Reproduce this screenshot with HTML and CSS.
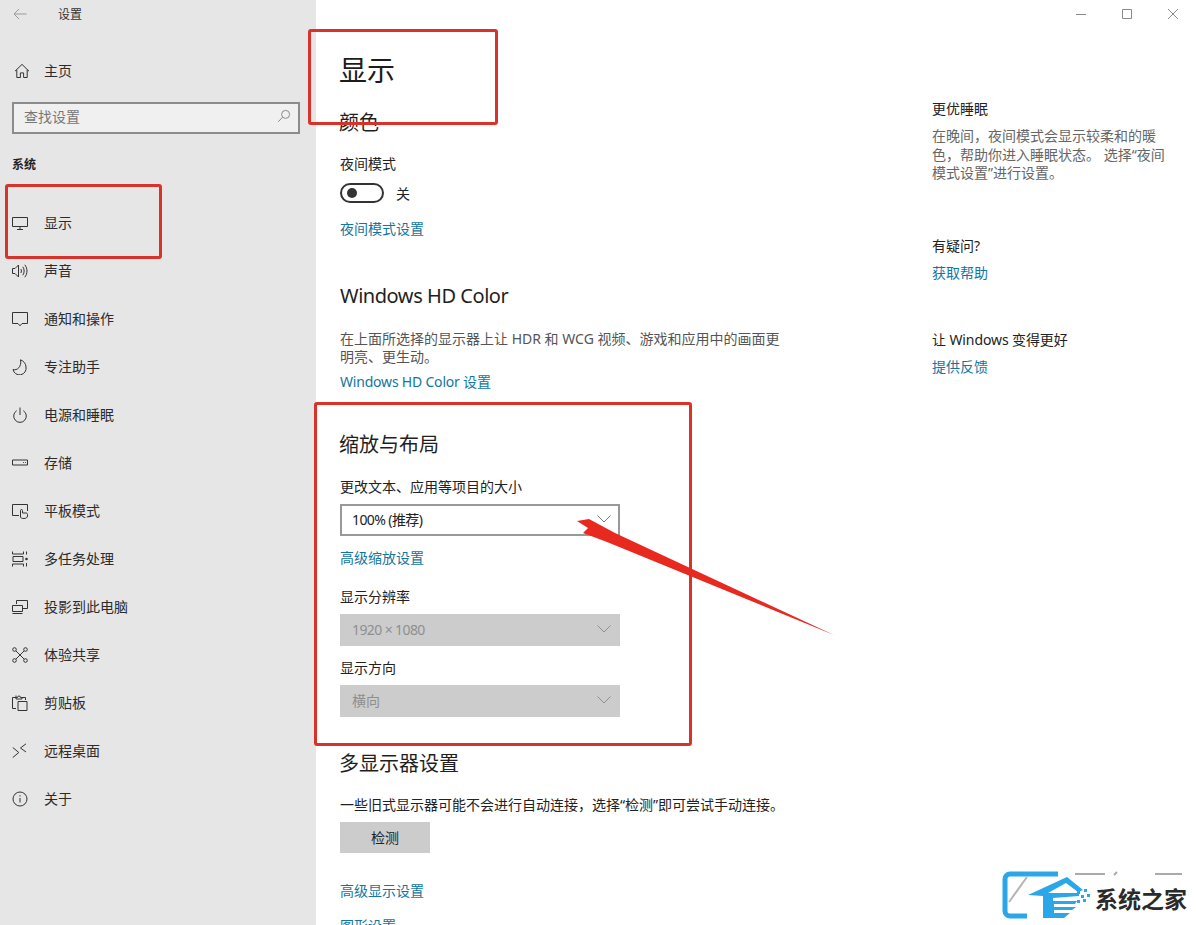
FILE: index.html
```html
<!DOCTYPE html>
<html lang="zh-CN">
<head>
<meta charset="utf-8">
<title>设置</title>
<link rel="stylesheet" href="styles.css">
</head>
<body>
<div class="app">
  <nav class="sidebar">
    <div class="titlebar">
      <svg class="back" viewBox="0 0 14 12"><path d="M13.5 6H1M6 1 1 6l5 5"/></svg>
      <span>设置</span>
    </div>
    <a class="item home"><svg viewBox="0 0 16 16"><path d="M1 8.2 8 1.4l7 6.8M2.8 6.8v7.7h3.6v-4.6h3.2v4.6h3.6V6.8"/></svg><span>主页</span></a>
    <div class="search"><span>查找设置</span><svg viewBox="0 0 14 14"><circle cx="8.6" cy="5.4" r="4"/><path d="M5.6 8.2 1.2 12.8"/></svg></div>
    <h2 class="group">系统</h2>
    <a class="item first"><svg viewBox="0 0 16 16"><path d="M.5 2.5h15v9H.5zM8 11.5v2.5M5 14.5h6"/></svg><span>显示</span></a>
    <a class="item"><svg viewBox="0 0 16 16"><path d="M.5 5.5h2.5L6.5 2v12L3 10.5H.5zM8.8 6c.8 1.200.8 2.800 0 4M10.800 3.800c1.800 2.500 1.800 5.900 0 8.400M12.800 1.800c2.900 3.700 2.900 8.700 0 12.400"/></svg><span>声音</span></a>
    <a class="item"><svg viewBox="0 0 16 16"><path d="M.5 1.500h15v11h-5.500L8 14.800 6 12.500H.5z"/></svg><span>通知和操作</span></a>
    <a class="item"><svg viewBox="0 0 16 16"><path d="M8.500.8c3 1 5.500 3.900 5.500 7.200a6.500 6.500 0 0 1-13 2.500c4 1.500 9-3 7.500-9.700z"/></svg><span>专注助手</span></a>
    <a class="item"><svg viewBox="0 0 16 16"><path d="M8 .5v7.500M4.700 3.700a6.300 6.300 0 1 0 6.600 0"/></svg><span>电源和睡眠</span></a>
    <a class="item"><svg viewBox="0 0 16 16"><path d="M.5 5h15v5H.5zM11 7.500h.8M13 7.500h.8"/></svg><span>存储</span></a>
    <a class="item"><svg viewBox="0 0 16 16"><path d="M7 12.500H.5v-11h15v6.500M8.500 14V7.500a1 1 0 0 1 2 0V10h3.500c1 0 1.500.6 1.500 1.500v1.500c0 1.500-1.500 2.500-3.500 2.500-2 0-3.500-.5-3.500-1.500z"/></svg><span>平板模式</span></a>
    <a class="item"><svg viewBox="0 0 16 16"><path d="M.5.500v2.500h11V.5M.5 15.500V13h11v2.500M1 5.500h10v5H1zM14.500.5v3M14.500 12v3.500"/><circle class="dot" cx="14.500" cy="8" r="1.300"/></svg><span>多任务处理</span></a>
    <a class="item"><svg viewBox="0 0 16 16"><path d="M4.500 5V1.500h11v8H11M.5 6.500h10v6H.5zM.5 14.500h10"/></svg><span>投影到此电脑</span></a>
    <a class="item"><svg viewBox="0 0 16 16"><circle cx="2.500" cy="2.500" r="1.800"/><circle cx="13.500" cy="2.500" r="1.800"/><circle cx="2.500" cy="13.500" r="1.800"/><circle cx="13.500" cy="13.500" r="1.800"/><path d="m4 4 8 8M12 4l-8 8"/></svg><span>体验共享</span></a>
    <a class="item"><svg viewBox="0 0 16 16"><path d="M4 13.500H.5V2.500H4M10 2.500h3.500V5M4 .5V4h6V2.500H8.500a1.500 1.500 0 0 0-3 0H4M6 6.500h9v9H6z"/></svg><span>剪贴板</span></a>
    <a class="item"><svg viewBox="0 0 16 16"><path d="m.8 4.500 6 5-6 5M14 .8 8.500 5l5.500 4"/></svg><span>远程桌面</span></a>
    <a class="item"><svg viewBox="0 0 16 16"><circle cx="8" cy="8" r="7"/><path d="M8 7v4.500M8 4.200v1.300"/></svg><span>关于</span></a>
  </nav>

  <main class="content">
    <h1 class="page-title">显示</h1>
    <h2 class="heading cjk colour-heading">颜色</h2>
    <div class="label night-label">夜间模式</div>
    <div class="toggle-row"><span class="toggle"><i></i></span><span>关</span></div>
    <a class="link night-link">夜间模式设置</a>
    <h2 class="heading hd-heading">Windows HD Color</h2>
    <p class="desc">在上面所选择的显示器上让 HDR 和 WCG 视频、游戏和应用中的画面更明亮、更生动。</p>
    <a class="link hd-link">Windows HD Color 设置</a>
    <h2 class="heading cjk scale-heading">缩放与布局</h2>
    <div class="label scale-label">更改文本、应用等项目的大小</div>
    <div class="select"><span class="num">100% (推荐)</span><svg viewBox="0 0 14 8"><path d="m.5.500 6.500 6.500 6.500-6.500"/></svg></div>
    <a class="link scale-link">高级缩放设置</a>
    <div class="label res-label">显示分辨率</div>
    <div class="select disabled"><span class="num">1920 × 1080</span><svg viewBox="0 0 14 8"><path d="m.5.500 6.500 6.500 6.500-6.500"/></svg></div>
    <div class="label orient-label">显示方向</div>
    <div class="select disabled"><span>横向</span><svg viewBox="0 0 14 8"><path d="m.5.500 6.500 6.500 6.500-6.500"/></svg></div>
    <h2 class="heading cjk multi-heading">多显示器设置</h2>
    <div class="label multi-label">一些旧式显示器可能不会进行自动连接，选择“检测”即可尝试手动连接。</div>
    <div class="button">检测</div>
    <a class="link adv-link">高级显示设置</a>
    <a class="link gfx-link">图形设置</a>
  </main>

  <aside class="aside">
    <div class="caption">
      <svg viewBox="0 0 10 10"><path d="M0 5.500h10"/></svg>
      <svg viewBox="0 0 10 10"><path d="M.5.500h9v9h-9z"/></svg>
      <svg viewBox="0 0 10 10"><path d="m0 0 10 10M10 0 0 10"/></svg>
    </div>
    <div class="label sleep-title">更优睡眠</div>
    <p class="note">在晚间，夜间模式会显示较柔和的暖色，帮助你进入睡眠状态。 选择“夜间模式设置”进行设置。</p>
    <div class="label q-title">有疑问?</div>
    <a class="link q-link">获取帮助</a>
    <div class="label better-title">让 Windows 变得更好</div>
    <a class="link q-link">提供反馈</a>
  </aside>
</div>

<div class="mark mark-title"></div>
<div class="mark mark-nav"></div>
<div class="mark mark-scale"></div>
<svg class="arrow" viewBox="0 0 280 130"><polygon points="3,22 15,20 41,34 260,136 33,43 9,34 14,29"/></svg>

<svg class="ghost" viewBox="0 0 110 5"><path d="M0 3h30M42 1l-3 3M80 3h27"/></svg>
<div class="logo">
  <svg viewBox="0 0 92 52">
    <path class="logo-frame" d="M56 4H8a5 5 0 0 0-5 5v32a5 5 0 0 0 5 5h17" />
    <path class="logo-fold" d="M25 7 7 32" />
    <path class="logo-house" d="M26 25 65 7l16 13-5 2-12-9-18 10h31v3l-26 2v3h24l-2 3H52v3h22l-4 3H52v3h16l-6 5H41V26z"/>
    <path class="logo-dots" d="M75 21h3v3h-3zM82 19h3v3h-3zM79 25h3v3h-3zM85 24h3v3h-3zM75 30h3v3h-3zM81 29h3v3h-3z"/>
  </svg>
  <span>系统之家</span>
</div>
</body>
</html>
```

FILE: styles.css
```css
* { box-sizing: border-box; }
html, body { margin: 0; padding: 0; height: 925px; overflow: hidden; background: #fff; }
body {
  position: relative;
  font-family: "Noto Sans", "Noto Sans CJK SC", sans-serif;
  font-size: 14px;
  color: #222;
}
h1, h2, p { margin: 0; font-weight: 400; }
.app { display: flex; height: 925px; overflow: hidden; }

.sidebar { width: 316px; flex: none; background: #e6e6e6; }
.titlebar { display: flex; align-items: center; height: 28px; padding-left: 13px; font-size: 12px; color: #333; }
.titlebar .back { width: 14px; height: 12px; margin-right: 31px; fill: none; stroke: #9a9a9a; stroke-width: 1; }
.item { display: flex; align-items: center; height: 48px; padding-left: 12px; color: #2b2b2b; line-height: 20px; }
.item svg { width: 16px; height: 16px; margin-right: 16px; flex: none; fill: none; stroke: #333; stroke-width: 1; }
.item .dot { fill: #333; stroke: none; }
.item.home { margin-top: 19px; padding-left: 14px; }
.item.home svg { margin-right: 14px; }
.search { display: flex; align-items: center; justify-content: space-between; height: 32px; margin: 7px 16px 0 12px; padding: 0 7px 4px 10px; background: #f0f0f0; border: 2px solid #8c8c8c; color: #777; }
.search svg { width: 14px; height: 14px; fill: none; stroke: #8a8a8a; stroke-width: 1; }
.group { margin: 21px 0 0 12px; font-size: 12px; line-height: 20px; font-weight: 700; color: #222; }
.item.first { margin-top: 24px; }

.content { width: 616px; flex: none; padding-left: 24px; }
.page-title { margin: 50px 0 0 -1px; font-size: 28px; line-height: 40px; color: #1c1c1c; }
.heading { font-size: 20px; line-height: 28px; color: #1f1f1f; }
.heading.cjk { margin-left: -1px; }
.label { line-height: 20px; color: #222; }
.link { display: block; line-height: 20px; color: #12769f; }
.colour-heading { margin-top: 19px; }
.night-label { margin-top: 17px; }
.toggle-row { display: flex; align-items: center; gap: 12px; height: 20px; margin-top: 9px; }
.toggle { display: flex; align-items: center; width: 44px; height: 20px; padding-left: 5px; border: 2px solid #333; border-radius: 10px; }
.toggle i { width: 10px; height: 10px; border-radius: 50%; background: #333; }
.night-link { margin-top: 16px; }
.hd-heading { margin-top: 43px; letter-spacing: -.45px; }
.desc { width: 444px; margin-top: 20px; line-height: 18px; color: #555; }
.hd-link { margin-top: 6px; letter-spacing: -.2px; }
.scale-heading { margin-top: 39px; }
.scale-label { margin-top: 18px; }
.select { display: flex; align-items: center; justify-content: space-between; width: 280px; height: 32px; margin-top: 7px; padding: 0 7px 2px 10px; border: 2px solid #999; color: #222; }
.select .num { letter-spacing: -.6px; }
.select svg { width: 14px; height: 8px; fill: none; stroke: #777; stroke-width: 1; }
.select.disabled { background: #ccc; border-color: #ccc; color: #8f8f8f; }
.select.disabled svg { stroke: #8f8f8f; }
.scale-link { margin-top: 12px; }
.res-label { margin-top: 19px; }
.orient-label { margin-top: 12px; }
.multi-heading { margin-top: 33px; }
.multi-label { margin-top: 17px; white-space: nowrap; }
.button { display: flex; align-items: center; justify-content: center; width: 90px; height: 31px; margin-top: 7px; padding-bottom: 2px; background: #ccc; color: #222; }
.adv-link { margin-top: 28px; }
.gfx-link { margin-top: 15px; }

.aside { flex: 1; padding-left: 0; }
.caption { display: flex; justify-content: flex-end; gap: 36px; height: 9px; margin-top: 9px; padding-right: 18px; }
.caption svg { width: 10px; height: 10px; fill: none; stroke: #8a8a8a; stroke-width: 1; }
.sleep-title { margin-top: 81px; }
.note { width: 240px; margin-top: 8px; line-height: 18.500px; color: #666; }
.q-title { margin-top: 53px; }
.q-link { margin-top: 7px; }
.better-title { margin-top: 47px; letter-spacing: -.1px; }

.mark { position: absolute; border: 3px solid #d8322a; border-radius: 3px; pointer-events: none; }
.mark-title { left: 308px; top: 29px; width: 190px; height: 96px; }
.mark-nav { left: 5px; top: 184px; width: 157px; height: 75px; }
.mark-scale { left: 314px; top: 402px; width: 378px; height: 344px; }
.arrow { position: absolute; left: 574px; top: 499px; width: 280px; height: 130px; overflow: visible; }
.arrow polygon { fill: #e8291f; }

.ghost { position: absolute; left: 1075px; top: 871px; width: 110px; height: 5px; fill: none; stroke: #aaa; stroke-width: 2; }
.logo { position: absolute; left: 1002px; top: 870px; display: flex; align-items: center; width: 194px; height: 52px; }
.logo svg { width: 92px; height: 52px; flex: none; fill: none; }
.logo span { font-size: 23px; font-weight: 700; color: #2a2a2a; white-space: nowrap; margin-left: 1px; margin-top: 3px; }
.logo-frame { stroke: #2aa7e8; stroke-width: 5; }
.logo-fold { stroke: #b5b5b5; stroke-width: 2; }
.logo-house, .logo-dots { fill: #2aa7e8; }
```
